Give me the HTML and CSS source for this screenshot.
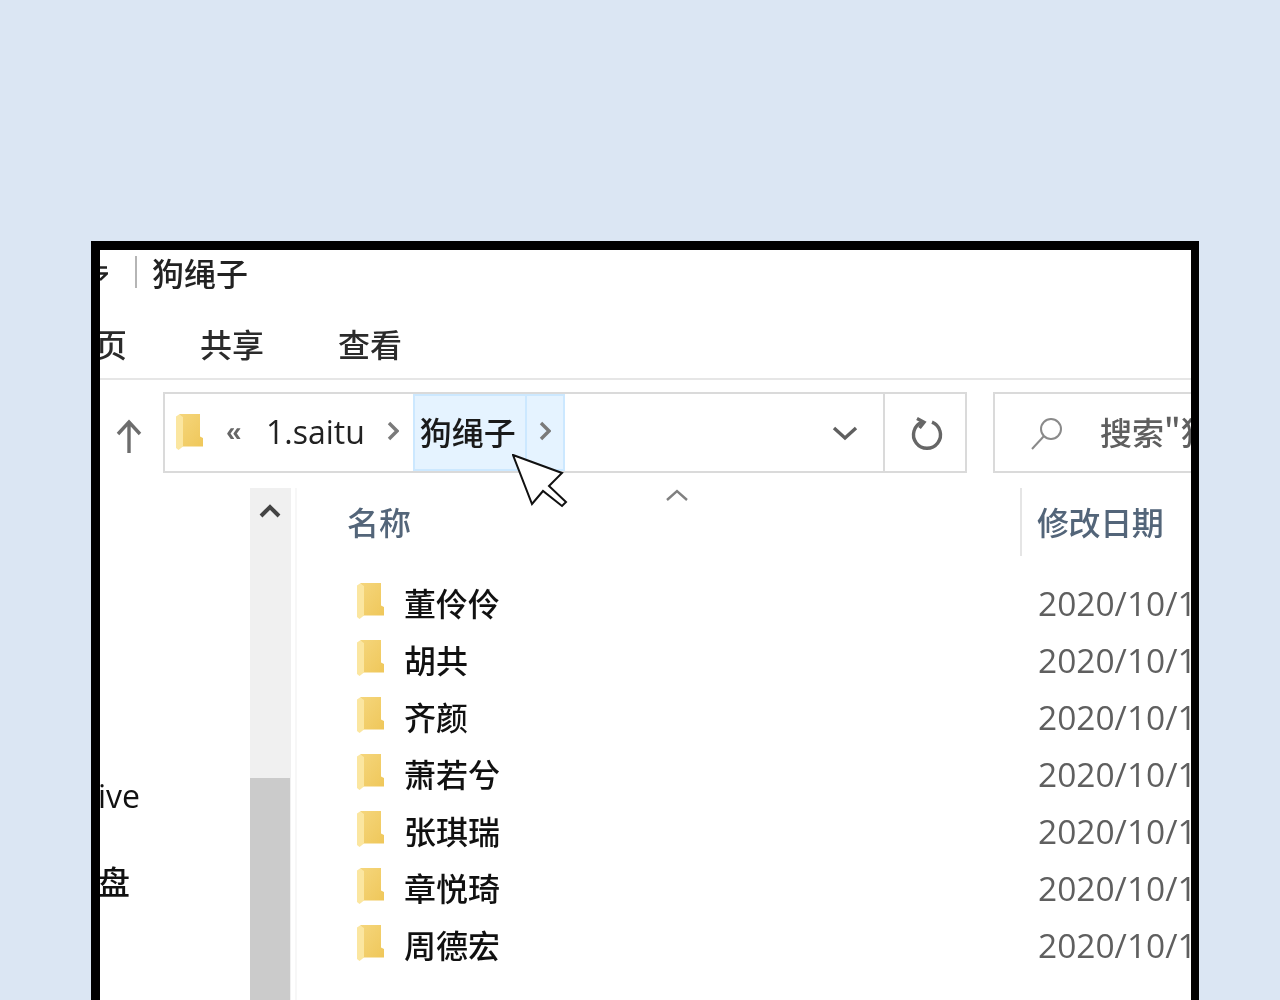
FILE: index.html
```html
<!DOCTYPE html>
<html lang="zh-CN">
<head>
<meta charset="utf-8">
<title>狗绳子</title>
<link rel="stylesheet" href="styles.css">
</head>
<body>
<svg class="defs" width="0" height="0" aria-hidden="true">
  <defs>
    <linearGradient id="fb" x1="0" y1="0" x2="1" y2="1"><stop offset="0" stop-color="#f5d67c"/><stop offset="1" stop-color="#efc75a"/></linearGradient>
    <symbol id="folder" viewBox="0 0 28 36">
      <path d="M3 0H24V22.5L27 24V32.5H6V4z" fill="url(#fb)"/>
      <path d="M0 2.5 L3 .5 L7 3V32.5L2.5 36 L0 34z" fill="#fbe6a0"/>
    </symbol>
  </defs>
</svg>
<main class="window">
  <div class="titlebar">
    <svg class="qa" width="8" height="18" viewBox="0 0 8 18"><path d="M0 2.5H7M0 8.5H7L0 15" fill="none" stroke="#222" stroke-width="2.4"/></svg>
    <span class="title-sep"></span>
    <span class="title">狗绳子</span>
  </div>
  <nav class="tabs">
    <span class="tab tab-home">页</span>
    <span class="tab tab-share">共享</span>
    <span class="tab tab-view">查看</span>
  </nav>
  <div class="addressrow">
    <svg class="up" width="28" height="36" viewBox="0 0 28 36"><path d="M14 34V3M3 15L14 3L25 15" fill="none" stroke="#6d6d6d" stroke-width="3.4"/></svg>
    <div class="address">
      <svg class="addr-folder" width="28" height="36"><use href="#folder"/></svg>
      <span class="chev-dbl">«</span>
      <span class="seg">1.saitu</span>
      <svg class="sepchev" width="12" height="20" viewBox="0 0 12 20"><path d="M2 2L10 10L2 18" fill="none" stroke="#7a7a7a" stroke-width="3.4"/></svg>
      <div class="crumb">
        <span class="crumb-text">狗绳子</span>
        <span class="crumb-arrow"><svg width="12" height="20" viewBox="0 0 12 20"><path d="M2 2L10 10L2 18" fill="none" stroke="#7a7a7a" stroke-width="3.4"/></svg></span>
        <svg class="cursor" width="58" height="56" viewBox="0 0 58 56"><path d="M1 1L50 19L37 32L54 48L50 52L31 37L20 50z" fill="#fff" stroke="#111" stroke-width="2" stroke-linejoin="miter"/></svg>
      </div>
      <span class="addr-fill"></span>
      <span class="addr-drop"><svg width="26" height="16" viewBox="0 0 26 16"><path d="M2 3L13 13L24 3" fill="none" stroke="#5f5f5f" stroke-width="3.4"/></svg></span>
      <span class="addr-refresh"><svg width="34" height="34" viewBox="0 0 34 34"><path d="M12 6.2A13.5 13.5 0 1 0 22 6.2" fill="none" stroke="#666" stroke-width="3.4"/><path d="M7 2.5L14 6.2L9.5 12" fill="none" stroke="#666" stroke-width="3.4"/></svg></span>
    </div>
    <div class="search">
      <svg class="search-icon" width="34" height="34" viewBox="0 0 34 34"><circle cx="21" cy="13" r="10" fill="none" stroke="#8a8a8a" stroke-width="2"/><path d="M14 20L2 33" fill="none" stroke="#8a8a8a" stroke-width="2"/></svg>
      <span class="search-text">搜索"狗绳子"</span>
    </div>
  </div>
  <div class="body">
    <aside class="navpane">
      <span class="nav-item nav-drive">ive</span>
      <span class="nav-item nav-disk">盘</span>
    </aside>
    <div class="scrollbar">
      <span class="sb-up"><svg width="22" height="14" viewBox="0 0 22 14"><path d="M2 12L11 3L20 12" fill="none" stroke="#444" stroke-width="4"/></svg></span>
      <span class="sb-track"></span>
      <span class="sb-thumb"></span>
    </div>
    <section class="content">
      <header class="cols">
        <div class="col-name">
          <span>名称</span>
          <svg class="sort" width="24" height="14" viewBox="0 0 24 14"><path d="M2 12L12 3L22 12" fill="none" stroke="#808080" stroke-width="2.4"/></svg>
        </div>
        <div class="col-date">修改日期</div>
      </header>
      <ul class="rows">
        <li class="row"><svg class="row-folder" width="28" height="36"><use href="#folder"/></svg><span class="name">董伶伶</span><span class="date">2020/10/1</span></li>
        <li class="row"><svg class="row-folder" width="28" height="36"><use href="#folder"/></svg><span class="name">胡共</span><span class="date">2020/10/1</span></li>
        <li class="row"><svg class="row-folder" width="28" height="36"><use href="#folder"/></svg><span class="name">齐颜</span><span class="date">2020/10/1</span></li>
        <li class="row"><svg class="row-folder" width="28" height="36"><use href="#folder"/></svg><span class="name">萧若兮</span><span class="date">2020/10/1</span></li>
        <li class="row"><svg class="row-folder" width="28" height="36"><use href="#folder"/></svg><span class="name">张琪瑞</span><span class="date">2020/10/1</span></li>
        <li class="row"><svg class="row-folder" width="28" height="36"><use href="#folder"/></svg><span class="name">章悦琦</span><span class="date">2020/10/1</span></li>
        <li class="row"><svg class="row-folder" width="28" height="36"><use href="#folder"/></svg><span class="name">周德宏</span><span class="date">2020/10/1</span></li>
      </ul>
    </section>
  </div>
</main>
</body>
</html>
```

FILE: styles.css
```css
* { box-sizing: border-box; }
html, body { margin: 0; height: 1000px; overflow: hidden; }
body {
  background: #dbe6f3;
  padding: 241px 81px 0 91px;
  font-family: "Noto Sans CJK SC", "Noto Sans", sans-serif;
  font-size: 32px;
  line-height: 40px;
  color: #1a1a1a;
}
.defs { position: absolute; }
.window {
  width: 1108px;
  height: 800px;
  border: 9px solid #000;
  border-right-width: 8px;
  background: #fff;
  overflow: hidden;
  display: flex;
  flex-direction: column;
  filter: blur(0.6px);
}
.titlebar { height: 44px; flex: none; display: flex; align-items: center; font-weight: 500; }
.qa { margin-top: 4px; flex: none; }
.title-sep { width: 2px; height: 32px; background: #b5b5b5; margin-left: 27px; margin-right: 15px; }
.title { color: #222; }
.tabs {
  height: 86px; flex: none;
  display: flex; align-items: center;
  border-bottom: 2px solid #e6e6e6;
  color: #2b2b2b;
  font-weight: 500;
  padding-top: 14px;
}
.tab-home { margin-left: -5px; }
.tab-share { margin-left: 73px; }
.tab-view { margin-left: 74px; }
.addressrow {
  height: 108px; flex: none;
  padding-top: 12px;
  display: flex; align-items: flex-start;
}
.up { margin: 27px 0 0 15px; flex: none; }
.address {
  margin-left: 20px;
  width: 804px; height: 81px; flex: none;
  border: 2px solid #dadada;
  display: flex; align-items: center;
}
.addr-folder { margin-left: 11px; flex: none; margin-top: -2px; }
.chev-dbl { margin-left: 22px; width: 30px; color: #666; font-family: "Liberation Sans", sans-serif; font-size: 28px; margin-top: -2px; font-weight: 700; }
.seg { margin-left: 10px; font-family: "Open Sans", sans-serif; color: #222; font-size: 32px; margin-top: -2px; }
.sepchev { margin-left: 22px; flex: none; margin-top: -4px; }
.crumb {
  position: relative;
  margin-left: 14px;
  height: 77px;
  display: flex;
  background: #e5f3ff;
  border: 2px solid #cce8ff;
  align-self: center;
}
.crumb-text { width: 112px; padding-left: 5px; display: flex; align-items: center; border-right: 2px solid #cce8ff; padding-bottom: 4px; white-space: nowrap; font-weight: 500; }
.crumb-arrow { width: 36px; display: flex; align-items: center; justify-content: center; padding-bottom: 4px; }
.cursor { position: absolute; left: 97px; top: 58px; }
.addr-fill { flex: 1; }
.addr-drop { width: 78px; height: 100%; display: flex; align-items: center; justify-content: center; border-right: 2px solid #dadada; }
.addr-refresh { width: 80px; display: flex; align-items: center; justify-content: center; padding-left: 3px; }
.search {
  margin-left: 26px;
  flex: 1; min-width: 260px; height: 81px;
  border: 2px solid #dadada;
  border-right: 0;
  display: flex; align-items: center;
  overflow: hidden;
  color: #5f5f5f;
  font-weight: 500;
}
.search-icon { margin-left: 35px; flex: none; }
.search-text { margin-left: 36px; white-space: nowrap; margin-top: -3px; }
.body { flex: 1; display: flex; min-height: 0; }
.navpane { width: 150px; flex: none; display: flex; flex-direction: column; align-items: flex-start; padding-top: 288px; }
.nav-item { color: #111; white-space: nowrap; }
.nav-drive { font-family: "Open Sans", sans-serif; margin-left: -2px; height: 40px; }
.nav-disk { margin-left: -2px; margin-top: 44px; font-weight: 500; }
.scrollbar { width: 41px; flex: none; background: #f0f0f0; display: flex; flex-direction: column; }
.sb-up { height: 46px; display: flex; align-items: center; justify-content: center; flex: none; padding-right: 2px; }
.sb-track { height: 244px; flex: none; }
.sb-thumb { flex: 1; background: #cbcbcb; margin-right: 1px; }
.content { flex: 1; min-width: 0; margin-left: 4px; border-left: 2px solid #f7f7f7; overflow: hidden; padding-left: 50px; }
.cols { display: flex; height: 68px; color: #536579; font-weight: 500; }
.col-name { width: 673px; flex: none; position: relative; padding-top: 13px; }
.sort { position: absolute; left: 318px; top: 0; }
.col-date { border-left: 2px solid #e5e5e5; padding: 13px 0 0 15px; white-space: nowrap; overflow: hidden; flex: 1; letter-spacing: -.4px; }
.rows { list-style: none; margin: 19px 0 0; padding: 0; }
.row { height: 57px; display: flex; align-items: center; white-space: nowrap; }
.row-folder { margin-left: 10px; flex: none; margin-top: -6px; }
.name { margin-left: 19px; width: 634px; flex: none; color: #111; font-weight: 500; margin-top: -3px; }
.date { font-family: "Open Sans", sans-serif; color: #5f5f5f; font-size: 33.5px; margin-top: -2px; }
```
